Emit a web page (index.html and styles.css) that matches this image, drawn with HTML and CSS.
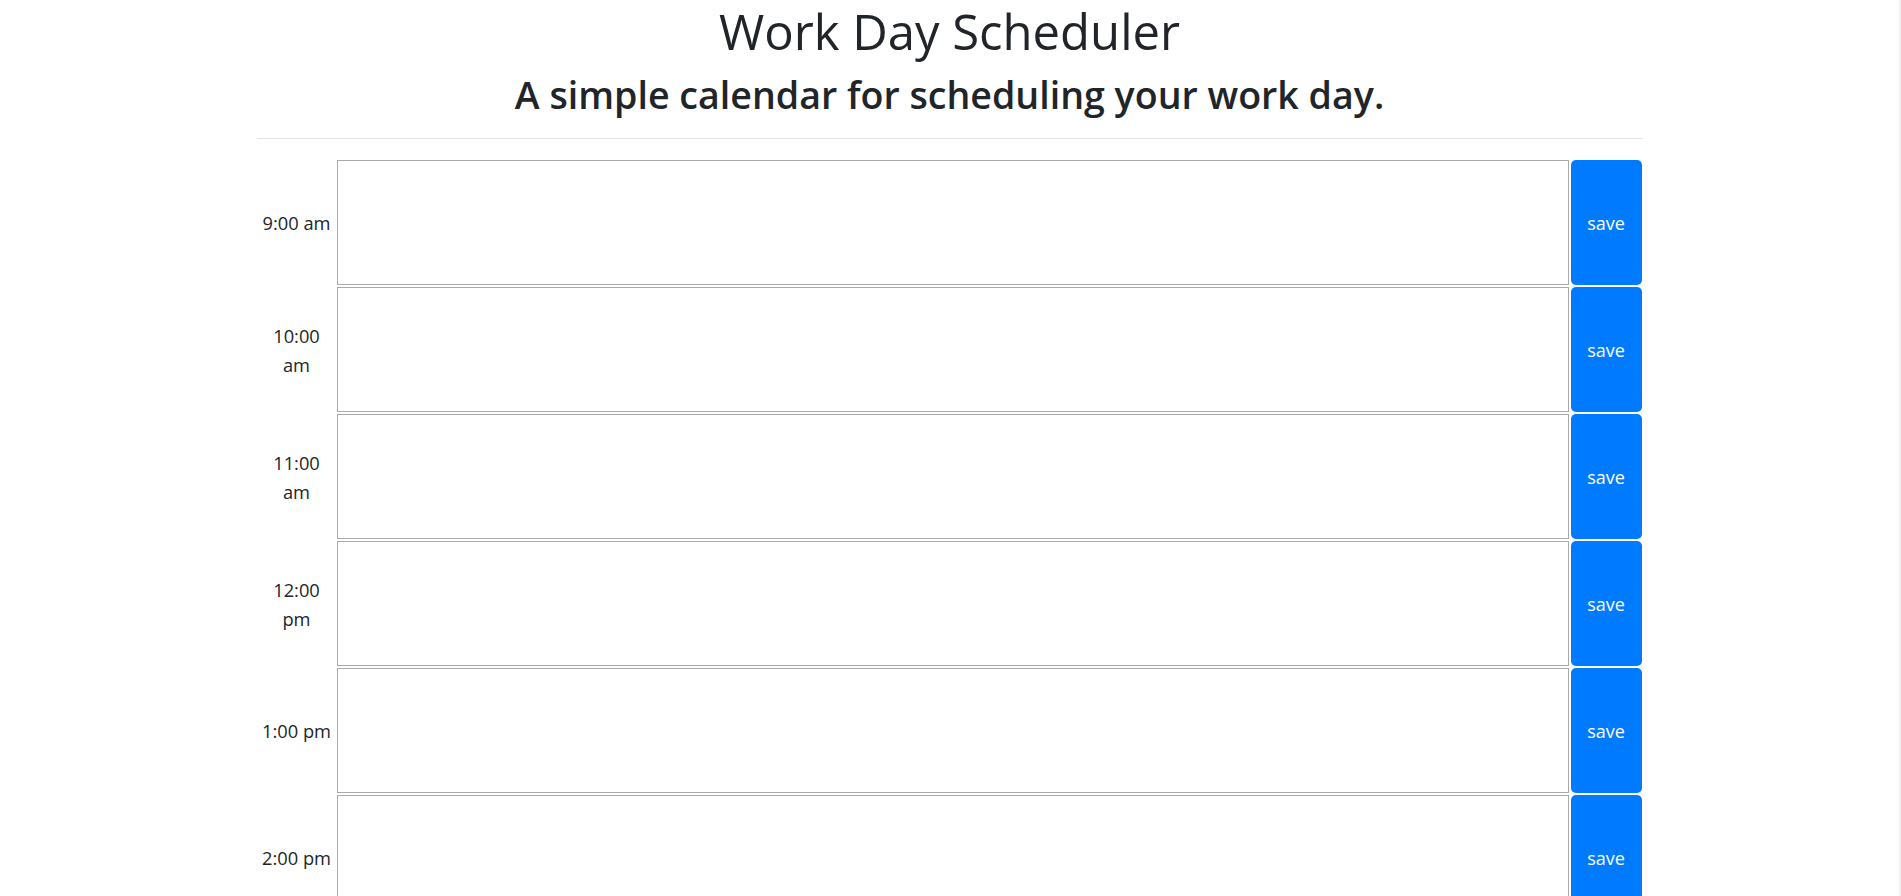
FILE: index.html
```html
<!DOCTYPE html>
<html lang="en">
<head>
<meta charset="utf-8">
<title>Work Day Scheduler</title>
<link rel="stylesheet" href="styles.css">
</head>
<body>
<main class="container">
  <header class="header">
    <h1 class="title">Work Day Scheduler</h1>
    <h2 class="subtitle">A simple calendar for scheduling your work day.</h2>
  </header>
  <hr class="divider">
  <section class="schedule">
    <div class="row"><div class="hour">9:00 am</div><textarea class="task"></textarea><button class="save">save</button></div>
    <div class="row"><div class="hour">10:00 am</div><textarea class="task"></textarea><button class="save">save</button></div>
    <div class="row"><div class="hour">11:00 am</div><textarea class="task"></textarea><button class="save">save</button></div>
    <div class="row"><div class="hour">12:00 pm</div><textarea class="task"></textarea><button class="save">save</button></div>
    <div class="row"><div class="hour">1:00 pm</div><textarea class="task"></textarea><button class="save">save</button></div>
    <div class="row"><div class="hour">2:00 pm</div><textarea class="task"></textarea><button class="save">save</button></div>
    <div class="row"><div class="hour">3:00 pm</div><textarea class="task"></textarea><button class="save">save</button></div>
    <div class="row"><div class="hour">4:00 pm</div><textarea class="task"></textarea><button class="save">save</button></div>
    <div class="row"><div class="hour">5:00 pm</div><textarea class="task"></textarea><button class="save">save</button></div>
  </section>
</main>
</body>
</html>
```

FILE: styles.css
```css
html {
  overflow: hidden;
  background: #ffffff;
}

body {
  margin: 0;
  min-height: 100vh;
  border-right: 2px solid #f1f1f1;
  font-family: "Open Sans", "Noto Sans", sans-serif;
  font-size: 18px;
  color: #212529;
  background: #ffffff;
}

.container {
  width: 1386px;
  margin: 0 auto;
}

.header {
  display: flex;
  flex-direction: column;
  align-items: center;
}

.title {
  margin: 0;
  padding-top: 2px;
  font-size: 49px;
  line-height: 58px;
  font-weight: 400;
}

.subtitle {
  margin: 12px 0 0;
  font-size: 37.6px;
  line-height: 46px;
  font-weight: 600;
}

.divider {
  margin: 20px 0 21px;
  border: 0;
  border-top: 1px solid #e5e5e5;
}

.schedule {
  display: flex;
  flex-direction: column;
  gap: 2px;
  padding-right: 1px;
}

.row {
  display: flex;
  height: 125px;
}

.hour {
  width: 80px;
  padding: 0 4px;
  box-sizing: border-box;
  display: flex;
  align-items: center;
  justify-content: center;
  text-align: center;
  font-size: 18.3px;
  line-height: 29px;
}

.task {
  flex: 1;
  margin: 0 2px 0 0;
  padding: 2px;
  border: 1px solid #a9a9a9;
  resize: none;
  font-family: inherit;
  font-size: 16px;
  background: #ffffff;
}

.save {
  width: 71px;
  border: 0;
  border-radius: 5px;
  background: #007bff;
  color: #ffffff;
  font-family: inherit;
  font-size: 18px;
  padding: 0;
}
```
